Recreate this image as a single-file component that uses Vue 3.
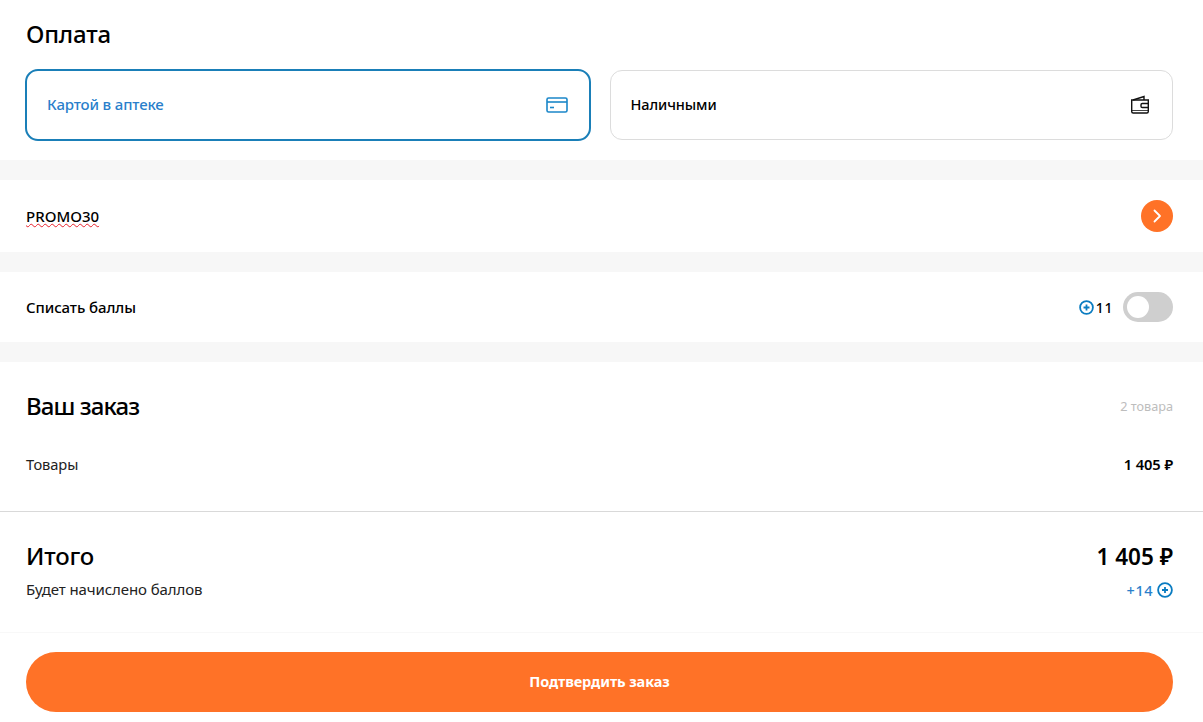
<script setup>
const payments = [
  { label: 'Картой в аптеке', active: true, icon: 'card' },
  { label: 'Наличными', active: false, icon: 'wallet' }
]
</script>

<template>
  <div class="page">
    <section class="pay">
      <h2 class="title pay-title">Оплата</h2>
      <div class="options">
        <div v-for="p in payments" :key="p.label" class="option" :class="{ active: p.active }">
          <span class="option-label">{{ p.label }}</span>
          <svg v-if="p.icon === 'card'" class="ico" width="22" height="16" viewBox="0 0 22 16" fill="none" stroke="#1b87c9" stroke-width="1.6">
            <rect x="1" y="1" width="20" height="14" rx="1.6" />
            <path d="M1 5h20" />
            <path d="M4 10.500h4" />
          </svg>
          <svg v-else class="ico" width="20" height="20" viewBox="0 0 20 20" fill="none" stroke="#111" stroke-width="1.400">
            <path d="M14 5V1.500L3 5" />
            <path d="M1.700 5h16.600v11.500a1.500 1.500 0 0 1-1.500 1.500H3.200a1.500 1.500 0 0 1-1.500-1.500z" />
            <path d="M18.300 8.500h-6a1.300 1.300 0 0 0-1.300 1.300v1.400a1.300 1.300 0 0 0 1.300 1.300h6" />
            <path d="M2 15.500h16" stroke-width="0.800" />
          </svg>
        </div>
      </div>
    </section>

    <section class="row promo">
      <span class="code">PROMO30</span>
      <span class="go">
        <svg width="10" height="14" viewBox="0 0 10 14" fill="none" stroke="#fff" stroke-width="1.800" stroke-linecap="round" stroke-linejoin="round">
          <path d="M2.500 1.500 8 7l-5.500 5.500" />
        </svg>
      </span>
    </section>

    <section class="row points">
      <span class="medium wide">Списать баллы</span>
      <div class="points-right">
        <svg class="plus" width="15" height="15" viewBox="0 0 15 15" fill="none" stroke="#0a7cc1" stroke-width="1.800">
          <circle cx="7.500" cy="7.500" r="6.400" />
          <path d="M4.500 7.500h6M7.500 4.500v6" />
        </svg>
        <span class="medium num">11</span>
        <span class="toggle"><i></i></span>
      </div>
    </section>

    <section class="order">
      <div class="order-top">
        <div class="between head">
          <h2 class="title tight">Ваш заказ</h2>
          <span class="count">2 товара</span>
        </div>
        <div class="between goods">
          <span class="regular goods-label">Товары</span>
          <span class="medium price">1 405 ₽</span>
        </div>
      </div>
      <div class="total">
        <div class="between total-head">
          <h2 class="title">Итого</h2>
          <span class="title sum">1 405 ₽</span>
        </div>
        <div class="between bonus">
          <span class="regular">Будет начислено баллов</span>
          <span class="earn">
            <span>+14</span>
            <svg width="16" height="16" viewBox="0 0 16 16" fill="none" stroke="#0a7cc1" stroke-width="1.800">
              <circle cx="8" cy="8" r="6.900" />
              <path d="M5 8h6M8 5v6" />
            </svg>
          </span>
        </div>
      </div>
    </section>

    <footer class="foot">
      <button class="confirm" type="button">Подтвердить заказ</button>
    </footer>
  </div>
</template>

<style>
html, body { margin: 0; background: #fff; }
</style>

<style scoped>
.page {
  width: 1203px;
  height: 722px;
  overflow: hidden;
  background: #f7f7f7;
  font-family: "Noto Sans", "Open Sans", sans-serif;
  color: #000;
  display: flex;
  flex-direction: column;
  gap: 20px;
}
section, footer { background: #fff; padding: 0 30px 0 26px; }
.title {
  margin: 0;
  font-size: 24px;
  line-height: 30px;
  font-weight: 500;
  letter-spacing: -0.2px;
}
.tight { letter-spacing: -0.9px; }
.pay { height: 160px; box-sizing: border-box; padding-top: 19px; }
.options {
  display: grid;
  grid-template-columns: 1fr 1fr;
  gap: 20px;
  margin-top: 21px;
}
.option {
  height: 70px;
  box-sizing: border-box;
  border: 1px solid #dcdcdc;
  border-radius: 12px;
  padding: 0 22px 2px 20px;
  display: flex;
  align-items: center;
  justify-content: space-between;
  font-size: 14.500px;
  font-weight: 500;
  letter-spacing: -0.1px;
}
.ico { margin-top: 2px; }
.option.active {
  height: 72px;
  margin: -1px;
  border: 2px solid #1a7fb8;
  border-radius: 13px;
  color: #2a7fcb;
  font-size: 15px;
  letter-spacing: -0.15px;
  padding-right: 21px;
}
.row {
  display: flex;
  align-items: center;
  justify-content: space-between;
}
.promo { height: 72px; }
.code {
  font-size: 15px;
  font-weight: 500;
  text-decoration: underline wavy #e8212b 1.400px;
  text-underline-offset: 1px;
}
.go {
  width: 32px;
  height: 32px;
  border-radius: 50%;
  background: #ff7227;
  display: flex;
  align-items: center;
  justify-content: center;
}
.points { height: 70px; }
.medium { font-size: 14px; font-weight: 500; letter-spacing: -0.1px; }
.wide { font-size: 15px; }
.regular { font-size: 15px; font-weight: 400; letter-spacing: -0.1px; color: #222; }
.goods-label { font-size: 14.700px; }
.points-right { display: flex; align-items: center; }
.num { margin-left: 2px; margin-right: 10px; letter-spacing: 0.6px; }
.plus { display: block; }
.toggle {
  width: 50px;
  height: 30px;
  border-radius: 15px;
  background: #cfcfcf;
  display: flex;
  align-items: center;
  padding-left: 4px;
  box-sizing: border-box;
}
.toggle i {
  display: block;
  width: 22px;
  height: 22px;
  border-radius: 50%;
  background: #fff;
}
.order { flex: 1; padding: 0; }
.order-top { height: 150px; box-sizing: border-box; padding: 29px 30px 0 26px; border-bottom: 1px solid #d9d9d9; }
.between { display: flex; align-items: center; justify-content: space-between; }
.count { font-size: 12.700px; color: #bdbdbd; }
.goods { margin-top: 33px; height: 20px; }
.price { font-size: 14.700px; font-weight: 600; }
.total { padding: 29px 30px 0 26px; }
.total-head { height: 30px; }
.sum { font-size: 22.500px; font-weight: 600; letter-spacing: 0; padding-top: 2px; }
.bonus { margin-top: 8px; height: 20px; }
.earn {
  display: flex;
  align-items: center;
  gap: 4px;
  padding-top: 2px;
  color: #2a7fcb;
  font-size: 14.500px;
  font-weight: 500;
  letter-spacing: 0.5px;
}
.foot {
  height: 90px;
  margin-top: -20px;
  border-top: 1px solid #f8f8f8;
  box-sizing: border-box;
  padding-top: 19px;
}
.confirm {
  display: block;
  width: 100%;
  height: 60px;
  border: 0;
  border-radius: 30px;
  padding: 0 0 3px;
  background: #ff7227;
  color: #fff;
  font-family: inherit;
  font-size: 14.500px;
  font-weight: 700;
  letter-spacing: -0.1px;
}
</style>
